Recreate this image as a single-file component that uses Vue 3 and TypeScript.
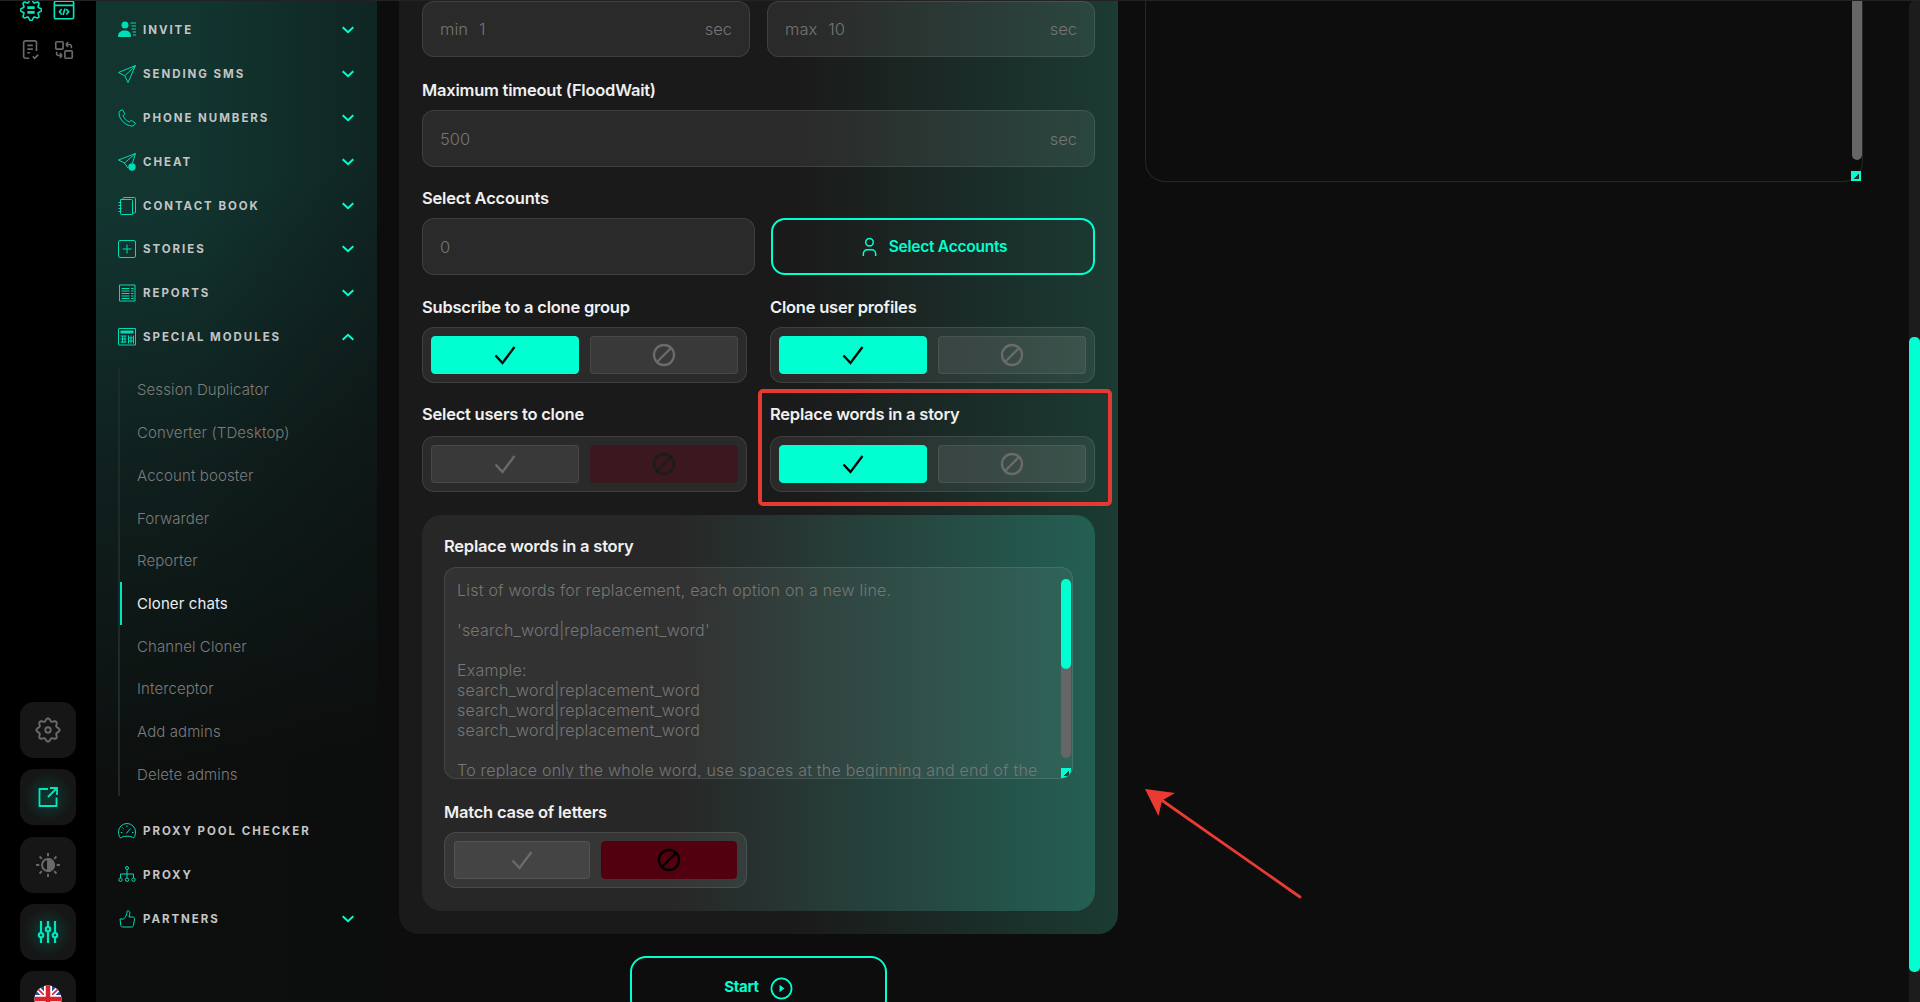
<template>
  <div class="page">
    <aside class="rail">
      <div class="rail-top">
        <svg class="ico-top on" viewBox="0 0 24 24"><path :d="topGear" /><path d="M8 9.500h8M8 14.500h8" stroke-width="3" /></svg>
        <svg class="ico-top on" viewBox="0 0 24 24"><rect x="1.500" y="2.500" width="21" height="19" rx="1.500" /><path d="M1.500 7h21M9.500 11l-2.500 3 2.500 3M14.500 11l2.500 3-2.500 3M13 10.500l-2 7" /></svg>
        <svg class="ico-top off" viewBox="0 0 24 24"><path d="M10 21H6a2 2 0 0 1-2-2V4a2 2 0 0 1 2-2h10a2 2 0 0 1 2 2v9M8 7h6M8 11h6M8 15h3M14 19l2 2 4-4" /></svg>
        <svg class="ico-top off" viewBox="0 0 24 24"><rect x="3" y="3" width="8" height="8" rx="1" /><rect x="13" y="13" width="8" height="8" rx="1" /><path d="M14 6h4a2 2 0 0 1 2 2v2M14 6l2.500-2.500M14 6l2.500 2.500M10 18H6a2 2 0 0 1-2-2v-2M10 18l-2.500-2.500M10 18l-2.500 2.500" /></svg>
      </div>
      <div class="rail-stack">
        <button class="rail-btn">
          <svg viewBox="0 0 24 24" class="ico-btn wide off"><path :d="softGear" /><circle cx="12" cy="12" r="2.500" /></svg>
        </button>
        <button class="rail-btn glow">
          <svg viewBox="0 0 24 24" class="ico-btn on"><path d="M12 4H3.500v17h17v-8.500M14 3h7v7M21 3l-9 9" /></svg>
        </button>
        <button class="rail-btn">
          <svg viewBox="0 0 24 24" class="ico-btn wide off"><circle cx="12" cy="12" r="5.500" /><path d="M12 6.500a5.500 5.500 0 0 1 0 11z" fill="currentColor" /><path d="M12 1v3M12 20v3M1 12h3M20 12h3M4.200 4.200l2.100 2.100M17.700 17.700l2.100 2.100M4.200 19.800l2.100-2.100M17.700 6.300l2.100-2.100" /></svg>
        </button>
        <button class="rail-btn glow">
          <svg viewBox="0 0 24 24" class="ico-btn on thick"><path d="M5 1v12M5 17.500V23M12 1v6M12 11.500V23M19 1v12M19 17.500V23" /><circle cx="5" cy="15.200" r="2.200" /><circle cx="12" cy="9.200" r="2.200" /><circle cx="19" cy="15.200" r="2.200" /></svg>
        </button>
        <button class="rail-btn">
          <svg viewBox="0 0 28 28" class="flag">
            <defs><clipPath id="flag-circle"><circle cx="14" cy="14" r="13.500" /></clipPath></defs>
            <g clip-path="url(#flag-circle)">
              <rect width="28" height="28" fill="#2a4f9e" />
              <path d="M0 0l28 28M28 0L0 28" stroke="#fff" stroke-width="5" />
              <path d="M0 0l28 28M28 0L0 28" stroke="#d8232f" stroke-width="1.600" />
              <path d="M14 0v28M0 14h28" stroke="#fff" stroke-width="8" />
              <path d="M14 0v28M0 14h28" stroke="#d8232f" stroke-width="4.500" />
            </g>
          </svg>
        </button>
      </div>
    </aside>

    <nav class="sidebar">
      <template v-for="item in navItems" :key="item.label">
        <div class="nav-row">
          <svg class="nav-icon" viewBox="0 0 18 18">
            <path v-for="(p, i) in icons[item.icon]" :key="i" :d="p.d" :class="{ solid: p.fill }" />
          </svg>
          <span class="nav-label">{{ item.label }}</span>
          <svg v-if="item.chevron" class="chevron" :class="{ up: item.open }" viewBox="0 0 12 8"><path d="M.7 1.200L6 6.200l5.300-5" /></svg>
        </div>
        <ul v-if="item.open" class="sub-list">
          <li v-for="sub in subItems" :key="sub" :class="{ active: sub === 'Cloner chats' }">{{ sub }}</li>
        </ul>
      </template>
    </nav>

    <main class="main">
      <section class="card">
        <div class="row-minmax">
          <div class="field"><span class="muted">min</span><span class="value">1</span><span class="unit">sec</span></div>
          <div class="field"><span class="muted">max</span><span class="value">10</span><span class="unit">sec</span></div>
        </div>

        <label class="label l-flood">Maximum timeout (FloodWait)</label>
        <div class="field"><span class="muted">500</span><span class="unit">sec</span></div>

        <label class="label l-accounts">Select Accounts</label>
        <div class="row-accounts">
          <div class="field"><span class="muted">0</span></div>
          <button class="outline-btn">
            <svg viewBox="0 0 18 20" class="user-ico"><circle cx="9" cy="5" r="4" /><path d="M2.500 19.500v-2.500a4 4 0 0 1 4-4h5a4 4 0 0 1 4 4v2.500" /></svg>
            Select Accounts
          </button>
        </div>

        <div class="toggle-grid">
          <div v-for="t in toggles" :key="t.label" class="toggle-cell" :class="{ marked: t.marked }">
            <label class="label">{{ t.label }}</label>
            <div class="toggle">
              <div class="tgl" :class="t.on ? 'tgl-on' : ''">
                <svg viewBox="0 0 24 24"><path d="M2.500 12.500l7 7.500L21.500 4" /></svg>
              </div>
              <div class="tgl" :class="t.on ? '' : 'tgl-dim'">
                <svg viewBox="0 0 24 24"><circle cx="12" cy="12" r="10" /><path d="M5 19L19 5" /></svg>
              </div>
            </div>
          </div>
        </div>

        <section class="inner">
          <label class="label l-inner">Replace words in a story</label>
          <div class="area">
            <div class="area-text">{{ areaText }}</div>
            <div class="bar"><div class="bar-thumb"></div></div>
            <div class="grip"></div>
          </div>
          <label class="label l-match">Match case of letters</label>
          <div class="toggle toggle-match">
            <div class="tgl">
              <svg viewBox="0 0 24 24"><path d="M2.500 12.500l7 7.500L21.500 4" /></svg>
            </div>
            <div class="tgl tgl-red">
              <svg viewBox="0 0 24 24"><circle cx="12" cy="12" r="10" /><path d="M5 19L19 5" /></svg>
            </div>
          </div>
        </section>
      </section>

      <button class="start-btn">
        Start
        <svg viewBox="0 0 24 24" class="play"><circle cx="12" cy="12" r="10.500" /><path d="M10 8l5 4-5 4z" class="solid" /></svg>
      </button>
    </main>

    <div class="log-panel">
      <div class="log-bar"></div>
      <div class="grip"></div>
    </div>

    <div class="page-scroll"><div class="page-thumb"></div></div>

    <svg class="arrow" viewBox="0 0 170 120">
      <path d="M0 0L30 4 17 11.500 13.500 27z" fill="#ea3b33" />
      <path d="M15 10L155 108" stroke="#ea3b33" stroke-width="2.800" stroke-linecap="round" />
    </svg>
  </div>
</template>

<script setup lang="ts">
interface IconPart {
  d: string
  fill?: boolean
}

interface NavItem {
  label: string
  icon: string
  chevron: boolean
  open?: boolean
}

// lobed outline for the gear icons
const lobed = (r: number, amp: number, n: number) => {
  const pts: string[] = []
  for (let i = 0; i < 120; i++) {
    const a = (i / 120) * Math.PI * 2
    const rad = r + amp * Math.cos(n * a)
    pts.push(`${(12 + rad * Math.sin(a)).toFixed(2)} ${(12 - rad * Math.cos(a)).toFixed(2)}`)
  }
  return `M${pts.join('L')}Z`
}

const topGear = lobed(10, 1.6, 8)
const softGear = lobed(9.5, 1.2, 8)

const icons: Record<string, IconPart[]> = {
  invite: [
    { d: 'M7 .5a3.500 3.500 0 1 0 0 7 3.500 3.500 0 0 0 0-7z', fill: true },
    { d: 'M0 15c0-3.500 3-5.500 6.800-5.500s6.200 2 6.200 5.500c0 .6-.4 1-1 1H1c-.6 0-1-.4-1-1z', fill: true },
    { d: 'M12.500 2H18M13.500 5H18M13.500 8H18M14.500 11H18M15 14h3' },
  ],
  send: [{ d: 'M17.500.5L.5 7.500 6.800 10.800 10 17.500zM17.500.5L6.800 10.800' }],
  phone: [{ d: 'M4.500 .8C2.500 1 .8 2.500 1 5c.5 5.500 6.500 11.500 12.500 12 2 .2 3.500-1 3.800-3l-4-2.700-2.100 1.700C8.500 11.800 6.300 9.500 5 6.800l1.800-2z' }],
  cheat: [
    { d: 'M17.500.5L.5 7l6 3 3.500 5M17.500.5L6.500 10M17.500.5L14.500 10' },
    { d: 'M14 10.300a3.700 3.700 0 1 0 0 7.400 3.700 3.700 0 0 0 0-7.400zm-.6 1.700v1.400H12v1.200h1.400V16h1.200v-1.400H16v-1.200h-1.400V12z', fill: true },
  ],
  book: [{ d: 'M2.500 2.500h11a1 1 0 0 1 1 1V17a.5.500 0 0 1-.5.500H3.500a1 1 0 0 1-1-1zM5 2.500V1.500a1 1 0 0 1 1-1h10.500a1 1 0 0 1 1 1V15a1 1 0 0 1-1 1h-2M.5 5.500h3M.5 8.500h3M.5 11.500h3M.5 14.500h3' }],
  stories: [{ d: 'M2 .5h14A1.500 1.500 0 0 1 17.500 2v14a1.500 1.500 0 0 1-1.500 1.500H2A1.500 1.500 0 0 1 .5 16V2A1.500 1.500 0 0 1 2 .5zM9 4.500v9M4.500 9h9' }],
  reports: [{ d: 'M1.500 1h15.500v16H1.500zM3.500 4.500h8M3.500 7h8M3.500 9.500h8M3.500 12h8M3.500 14.500h8M13 4.500h2.500M13 7h2.500M13 9.500h2.500M13 12h2.500M13 14.500h2.500' }],
  modules: [
    { d: 'M1 .5h16.500v16.500H1a.5.500 0 0 1-.5-.5V1A.5.500 0 0 1 1 .5z' },
    { d: 'M2.500 2.500h13v3h-13z', fill: true },
    { d: 'M2.500 8h6M2.500 11h6M2.500 14h6M4.500 8v7M7 8v7M10.500 7.500v8M13 7.500v8M15.500 7.500v8M10.500 10h5M10.500 13h5' },
  ],
  gauge: [{ d: 'M2.500 16C1 14.500.5 12 .5 10a8.500 8.500 0 0 1 17 0c0 2-.5 4.500-2 6-1.500-1.200-3.500-1.800-6.500-1.800S4 14.800 2.500 16zM8.300 11.500L12.500 6.500M9 3.500v1.500M4.500 5.500l1 1M2.800 10.500h1.500M14 10.500h1.500' }],
  tree: [{ d: 'M9 .5a1.500 1.500 0 1 0 0 3 1.500 1.500 0 0 0 0-3zM9 3.500V12M2.500 12V8h13v4M2.500 12a1.700 1.700 0 1 0 0 3.400 1.700 1.700 0 0 0 0-3.400zM9 12a1.700 1.700 0 1 0 0 3.400A1.700 1.700 0 0 0 9 12zM15.500 12a1.700 1.700 0 1 0 0 3.400 1.700 1.700 0 0 0 0-3.400z' }],
  thumb: [{ d: 'M2 9h3c1 0 1.500-.7 2-1.500 1-1.700 2-3 2-6 0-1.200 2.500-1 2.800 1 .2 1.500-.5 3-.8 4.500h4c1 0 1.700 1 1.500 2l-1 6.500c-.2 1-1 1.500-2 1.500H4.500c-1 0-1.500-.5-1.700-1.500z' }],
}

const navItems: NavItem[] = [
  { label: 'INVITE', icon: 'invite', chevron: true },
  { label: 'SENDING SMS', icon: 'send', chevron: true },
  { label: 'PHONE NUMBERS', icon: 'phone', chevron: true },
  { label: 'CHEAT', icon: 'cheat', chevron: true },
  { label: 'CONTACT BOOK', icon: 'book', chevron: true },
  { label: 'STORIES', icon: 'stories', chevron: true },
  { label: 'REPORTS', icon: 'reports', chevron: true },
  { label: 'SPECIAL MODULES', icon: 'modules', chevron: true, open: true },
  { label: 'PROXY POOL CHECKER', icon: 'gauge', chevron: false },
  { label: 'PROXY', icon: 'tree', chevron: false },
  { label: 'PARTNERS', icon: 'thumb', chevron: true },
]

const subItems = [
  'Session Duplicator',
  'Converter (TDesktop)',
  'Account booster',
  'Forwarder',
  'Reporter',
  'Cloner chats',
  'Channel Cloner',
  'Interceptor',
  'Add admins',
  'Delete admins',
]

const toggles = [
  { label: 'Subscribe to a clone group', on: true, marked: false },
  { label: 'Clone user profiles', on: true, marked: false },
  { label: 'Select users to clone', on: false, marked: false },
  { label: 'Replace words in a story', on: true, marked: true },
]

const areaText = `List of words for replacement, each option on a new line.

'search_word|replacement_word'

Example:
search_word|replacement_word
search_word|replacement_word
search_word|replacement_word

To replace only the whole word, use spaces at the beginning and end of the`
</script>

<style>
html,
body {
  margin: 0;
  background: #0d0d0d;
  overflow: hidden;
}
</style>

<style scoped>
.page {
  position: relative;
  display: flex;
  box-sizing: border-box;
  height: 1002px;
  overflow: hidden;
  background: #0d0d0d;
  border-top: 1px solid #222;
  font-family: Inter, 'Liberation Sans', sans-serif;
  color: #fff;
}

/* left rail */
.rail {
  flex: 0 0 96px;
  background: #000;
  display: flex;
  flex-direction: column;
}

.rail-top {
  display: grid;
  grid-template-columns: 22px 22px;
  column-gap: 11px;
  row-gap: 18px;
  padding: 0 0 0 20px;
  margin-top: -2px;
}

.ico-top {
  width: 22px;
  height: 22px;
  fill: none;
  stroke: currentColor;
  stroke-width: 1.800;
}

.on {
  color: #00e6bd;
}

.off {
  color: #6a6a6a;
}

.rail-stack {
  display: flex;
  flex-direction: column;
  gap: 11.300px;
  padding: 641px 0 0 20px;
}

.rail-btn {
  flex: 0 0 56px;
  width: 56px;
  height: 56px;
  padding: 0;
  border: 0;
  border-radius: 14px;
  background: #161616;
  display: flex;
  align-items: center;
  justify-content: center;
}

.rail-btn.glow {
  background: radial-gradient(circle at center, #0d3a32 0%, #161616 62%);
}

.ico-btn {
  width: 24px;
  height: 24px;
  fill: none;
  stroke: currentColor;
  stroke-width: 1.800;
}

.ico-btn.wide {
  width: 26px;
  height: 26px;
}

.ico-btn.thick {
  stroke-width: 2.200;
}

.flag {
  width: 28px;
  height: 28px;
}

/* sidebar */
.sidebar {
  flex: 0 0 281px;
  box-sizing: border-box;
  padding: 7px 23px 0 22px;
  background:
    linear-gradient(90deg, transparent 35%, rgba(12, 14, 14, 0.4) 100%),
    linear-gradient(170deg, #123530 0%, #123530 20%, #0f1f1d 46%, #0c0f0e 75%);
}

.nav-row {
  display: flex;
  align-items: center;
  height: 43.900px;
}

.nav-icon {
  flex: 0 0 18px;
  width: 18px;
  height: 18px;
  fill: none;
  stroke: #00dcb4;
  stroke-width: 1;
}

.solid {
  fill: currentColor;
  stroke: none;
}

.nav-icon .solid {
  fill: #00dcb4;
}

.nav-label {
  margin-left: 7px;
  font-size: 11.500px;
  font-weight: 700;
  letter-spacing: 1.950px;
  color: #c4c4c4;
}

.chevron {
  margin-left: auto;
  width: 12px;
  height: 8px;
  fill: none;
  stroke: #00ffd1;
  stroke-width: 2;
}

.chevron.up {
  transform: rotate(180deg);
}

.sub-list {
  list-style: none;
  margin: 9.500px 0 14px;
  padding: 0;
  border-left: 2px solid #1e2b29;
}

.sub-list li {
  display: flex;
  align-items: center;
  height: 42.700px;
  padding-left: 15px;
  border-left: 2px solid transparent;
  font-size: 15px;
  font-weight: 300;
  letter-spacing: 0.100px;
  color: #7c7c7c;
}

.sub-list li.active {
  border-left-color: #00e6bd;
  color: #ececec;
  font-weight: 400;
}

/* form */
.main {
  flex: 0 0 719px;
  margin-left: 22px;
  display: flex;
  flex-direction: column;
}

.card {
  box-sizing: border-box;
  padding: 0 23px 23px;
  border-radius: 0 0 20px 20px;
  background: linear-gradient(90deg, #1a1a1a 0%, #1a1a1a 55%, #1b3b33 100%);
}

.label {
  display: block;
  height: 20px;
  line-height: 20px;
  font-size: 16.500px;
  font-weight: 600;
  letter-spacing: -0.220px;
  color: #f0f0f0;
}

.l-flood {
  margin: 22.500px 0 10.500px;
}

.l-accounts {
  margin: 20.500px 0 10.500px;
}

.row-minmax {
  display: grid;
  grid-template-columns: 328px 328px;
  gap: 17px;
}

.row-accounts {
  display: grid;
  grid-template-columns: 333px 324px;
  gap: 16px;
}

.field {
  box-sizing: border-box;
  height: 57px;
  display: flex;
  align-items: center;
  padding: 0 17px;
  border: 1px solid rgba(255, 255, 255, 0.1);
  border-radius: 12px;
  background: rgba(255, 255, 255, 0.07);
  font-size: 16.500px;
  font-weight: 300;
  color: #757575;
}

.row-minmax .field {
  height: 56px;
}

.value {
  margin-left: 11px;
}

.unit {
  margin-left: auto;
}

.outline-btn {
  height: 57px;
  border: 2px solid #00ffd1;
  border-radius: 14px;
  background: transparent;
  display: flex;
  align-items: center;
  justify-content: center;
  gap: 11px;
  padding: 0 0 0 2px;
  font-family: inherit;
  font-size: 15.500px;
  font-weight: 600;
  letter-spacing: -0.250px;
  color: #00ffd1;
}

.user-ico {
  width: 17px;
  height: 20px;
  fill: none;
  stroke: #00ffd1;
  stroke-width: 1.600;
}

.toggle-grid {
  display: grid;
  grid-template-columns: 325px 325px;
  column-gap: 23px;
}

.toggle-cell {
  position: relative;
}

.toggle-cell:nth-child(-n + 2) {
  padding-top: 21.500px;
}

.toggle-cell:nth-child(n + 3) {
  padding-top: 21px;
}

.toggle-cell .label {
  margin-bottom: 10.500px;
}

.toggle-cell:nth-child(n + 3) .label {
  margin-bottom: 12px;
}

.toggle-cell.marked::after {
  content: '';
  position: absolute;
  inset: 6px -17px -14px -12px;
  border: 4px solid #e53a31;
  border-radius: 5px;
  pointer-events: none;
}

.toggle {
  box-sizing: border-box;
  height: 56px;
  display: flex;
  gap: 11px;
  padding: 8px 8px;
  border: 1px solid rgba(255, 255, 255, 0.1);
  border-radius: 12px;
  background: rgba(255, 255, 255, 0.07);
}

.tgl {
  flex: 1;
  display: flex;
  align-items: center;
  justify-content: center;
  border: 1px solid rgba(255, 255, 255, 0.08);
  border-radius: 4px;
  background: rgba(255, 255, 255, 0.07);
}

.tgl svg {
  width: 24px;
  height: 24px;
  fill: none;
  stroke: #6b6b6b;
  stroke-width: 2.300;
}

.tgl-on {
  border-color: #00ffd1;
  background: #00ffd1;
}

.tgl-on svg {
  stroke: #000;
}

.tgl-dim {
  border-color: #3a181d;
  background: #3a181d;
}

.tgl-dim svg {
  stroke: #1c1c1c;
}

.tgl-red {
  border-color: #52000f;
  background: #52000f;
}

.tgl-red svg {
  stroke: #000;
}

.inner {
  margin-top: 23px;
  padding: 20.500px 22px 23px;
  border-radius: 20px;
  background: linear-gradient(90deg, #272727 0%, #272727 38%, #245f53 100%);
}

.l-inner {
  margin-bottom: 11.500px;
}

.l-match {
  margin: 22.500px 0 10.500px;
}

.area {
  position: relative;
  box-sizing: border-box;
  height: 212px;
  overflow: hidden;
  padding: 11.500px 12px 0;
  border: 1px solid rgba(255, 255, 255, 0.1);
  border-radius: 12px;
  background: rgba(255, 255, 255, 0.05);
}

.area-text {
  white-space: pre;
  font-size: 16px;
  font-weight: 300;
  line-height: 20px;
  letter-spacing: 0.220px;
  color: #767676;
}

.bar {
  position: absolute;
  top: 11px;
  right: 1px;
  width: 10px;
  height: 179px;
  border-radius: 5px;
  background: #666;
}

.bar-thumb {
  height: 90px;
  border-radius: 5px;
  background: #00ffd1;
}

.grip {
  position: absolute;
  right: 1px;
  bottom: 0;
  width: 10px;
  height: 10px;
  background: #00ffd1;
}

.grip::after {
  content: '';
  position: absolute;
  right: 2px;
  bottom: 2px;
  width: 5px;
  height: 5px;
  background: linear-gradient(135deg, transparent 50%, #123a33 50%);
}

.toggle-match {
  width: 303px;
  padding: 8px 9px;
}

.start-btn {
  align-self: flex-start;
  flex: 0 0 60px;
  width: 257px;
  margin: 22px 0 0 231px;
  border: 2px solid #00ffd1;
  border-radius: 16px;
  background: transparent;
  display: flex;
  align-items: flex-start;
  justify-content: center;
  gap: 11px;
  padding: 19px 0 0;
  font-family: inherit;
  font-size: 15px;
  font-weight: 700;
  letter-spacing: -0.300px;
  color: #00ffd1;
}

.play {
  width: 23px;
  height: 23px;
  fill: none;
  stroke: #00ffd1;
  stroke-width: 1.800;
}

.play .solid {
  fill: #00ffd1;
}

/* right panel, scrolled so that only its lower end shows */
.log-panel {
  position: relative;
  flex: 0 0 718px;
  box-sizing: border-box;
  height: 181px;
  margin-left: 27px;
  border: 1px solid #262626;
  border-top: 0;
  border-radius: 0 0 20px 20px;
}

.log-bar {
  position: absolute;
  top: 0;
  right: 0;
  width: 10px;
  height: 159px;
  border-radius: 0 0 5px 5px;
  background: #666;
}

.page-scroll {
  position: absolute;
  top: 0;
  right: 0;
  bottom: 0;
  width: 11px;
  border-radius: 5px 0 0 0;
  background: #1c1c1c;
}

.page-thumb {
  height: 635px;
  margin-top: 336px;
  border-radius: 5px;
  background: #00ffd1;
}

.arrow {
  position: absolute;
  left: 1145px;
  top: 788px;
  width: 170px;
  height: 120px;
}
</style>
